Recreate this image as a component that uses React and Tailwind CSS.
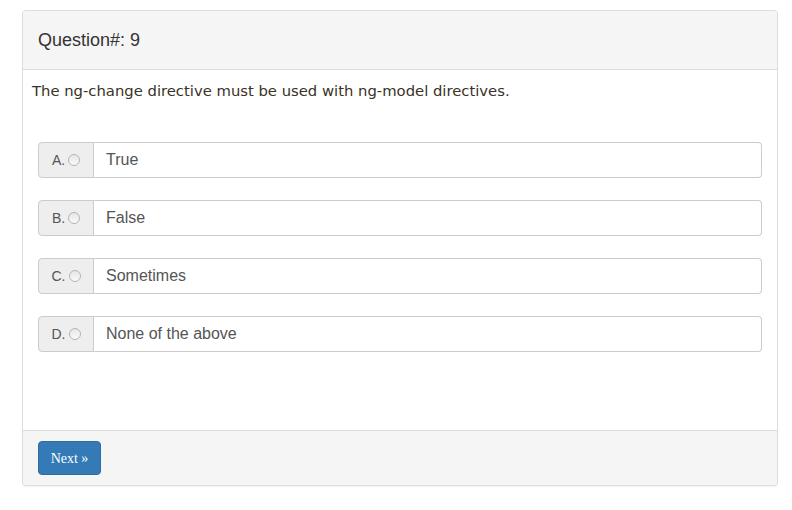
export default function App() {
  const options = [
    { letter: 'A.', text: 'True' },
    { letter: 'B.', text: 'False' },
    { letter: 'C.', text: 'Sometimes' },
    { letter: 'D.', text: 'None of the above' },
  ]

  return (
    <div className="min-h-screen bg-white pt-[10px] pl-[22px] pr-[14px]">
      <div className="w-[756px] border border-[#dddddd] rounded bg-white shadow-[0_1px_1px_rgba(0,0,0,0.05)] flex flex-col">
        {/* HEADER */}
        <div className="h-[59px] bg-[#f5f5f5] border-b border-[#dddddd] rounded-t px-[15px] flex items-center">
          <h3 className="text-[18px] text-[#333333] font-['Liberation_Sans',Arial,sans-serif]">
            Question#: 9
          </h3>
        </div>

        {/* BODY */}
        <div className="h-[360px] px-[9px] pt-[11px]">
          <p className="text-[14.8px] leading-[20px] text-[#3a3226] font-['DejaVu_Sans',Verdana,sans-serif]">
            The ng-change directive must be used with ng-model directives.
          </p>

          <div className="mt-[41px] ml-[6px] mr-[6px] flex flex-col gap-[22px]">
            {options.map((opt) => (
              <div key={opt.letter} className="flex h-[36px]">
                <div className="w-[56px] shrink-0 bg-[#eeeeee] border border-[#cccccc] rounded-l flex items-center justify-center gap-[3px] text-[14px] text-[#555555] font-['Liberation_Sans',Arial,sans-serif]">
                  <span>{opt.letter}</span>
                  <span className="w-[12px] h-[12px] rounded-full border border-[#b5b5b5] bg-gradient-to-b from-[#e6e6e6] to-[#fafafa]" />
                </div>
                <div className="flex-1 border border-l-0 border-[#cccccc] rounded-r flex items-center px-[12px] text-[16px] text-[#555555] font-['Liberation_Sans',Arial,sans-serif]">
                  {opt.text}
                </div>
              </div>
            ))}
          </div>
        </div>

        {/* FOOTER */}
        <div className="h-[55px] bg-[#f5f5f5] border-t border-[#dddddd] rounded-b px-[15px] pt-[10px]">
          <button className="w-[63px] h-[34px] bg-[#337ab7] border border-[#2e6da4] rounded text-white text-[14px] font-['Liberation_Serif','Times_New_Roman',serif]">
            Next »
          </button>
        </div>
      </div>
    </div>
  )
}
